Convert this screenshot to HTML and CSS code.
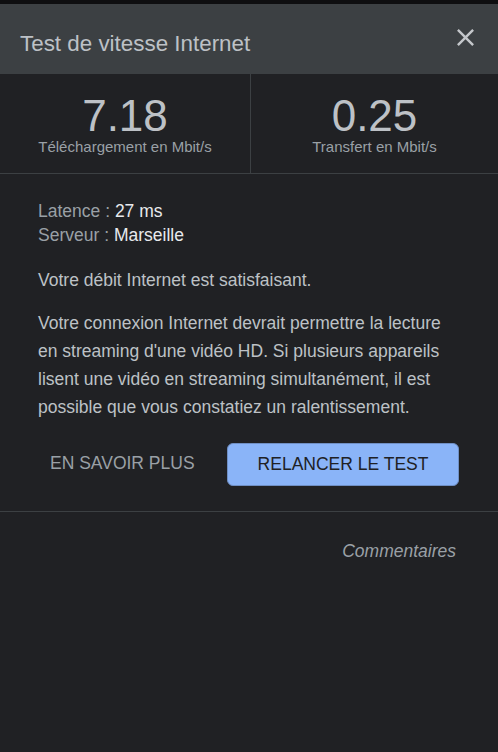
FILE: index.html
```html
<!DOCTYPE html>
<html lang="fr">
<head>
<meta charset="utf-8">
<title>Test de vitesse Internet</title>
<link rel="stylesheet" href="styles.css">
</head>
<body>
<div class="topstrip"></div>
<header class="hdr">
  <h1 class="title">Test de vitesse Internet</h1>
  <button class="close" aria-label="Fermer">
    <svg viewBox="0 0 24 24" width="29" height="29"><path fill="currentColor" d="M19 6.41L17.59 5 12 10.59 6.41 5 5 6.41 10.59 12 5 17.59 6.41 19 12 13.41 17.59 19 19 17.59 13.41 12z"/></svg>
  </button>
</header>
<section class="stats">
  <div class="stat">
    <div class="num">7.18</div>
    <div class="lbl">Téléchargement en Mbit/s</div>
  </div>
  <div class="stat stat-right">
    <div class="num">0.25</div>
    <div class="lbl">Transfert en Mbit/s</div>
  </div>
</section>
<section class="info">
  <div class="meta">
    <div><span class="k">Latence :</span> <span class="v">27 ms</span></div>
    <div><span class="k">Serveur :</span> <span class="v">Marseille</span></div>
  </div>
  <p class="status">Votre débit Internet est satisfaisant.</p>
  <p class="desc">Votre connexion Internet devrait permettre la lecture en streaming d'une vidéo HD. Si plusieurs appareils lisent une vidéo en streaming simultanément, il est possible que vous constatiez un ralentissement.</p>
  <div class="actions">
    <button class="btn-text">EN SAVOIR PLUS</button>
    <button class="btn-primary">RELANCER LE TEST</button>
  </div>
</section>
<footer class="foot">
  <a class="feedback">Commentaires</a>
</footer>
</body>
</html>
```
FILE: styles.css
```css
html, body {
  margin: 0;
  padding: 0;
  background: #202124;
  overflow: hidden;
}
body {
  font-family: "Liberation Sans", Arial, sans-serif;
  color: #bdc1c6;
  width: 498px;
  height: 752px;
}
.topstrip {
  height: 4px;
  background: #0e0e10;
}
.hdr {
  height: 70px;
  background: #3c4043;
  display: flex;
  justify-content: space-between;
  align-items: flex-start;
  padding: 0 18px 0 20px;
  box-sizing: border-box;
}
.title {
  margin: 26px 0 0;
  font-size: 22.4px;
  line-height: 28px;
  font-weight: normal;
  color: #bdc1c6;
}
.close {
  margin-top: 19px;
  padding: 0;
  border: 0;
  background: none;
  color: #c4c7cb;
  width: 29px;
  height: 29px;
  display: block;
}
.close svg { display: block; }
.stats {
  display: grid;
  grid-template-columns: 250px 1fr;
  border-bottom: 1px solid #3c4043;
}
.stat {
  padding: 21px 0 16px;
  text-align: center;
}
.stat-right {
  border-left: 1px solid #3c4043;
}
.num {
  font-size: 44px;
  line-height: 42px;
  color: #bdc1c6;
}
.lbl {
  font-size: 15px;
  line-height: 20px;
  color: #9aa0a6;
}
.info {
  padding: 25px 38px 25px;
  border-bottom: 1px solid #3c4043;
  font-size: 17.5px;
}
.meta {
  line-height: 24px;
}
.k { color: #9aa0a6; }
.v { color: #e8eaed; }
.status {
  margin: 19px 0 0;
  line-height: 28px;
  color: #bdc1c6;
}
.desc {
  margin: 15px 0 0;
  line-height: 28px;
  color: #bdc1c6;
}
.actions {
  margin-top: 22px;
  display: flex;
  align-items: center;
  gap: 20px;
}
.btn-text {
  font-family: inherit;
  font-size: 17.5px;
  background: none;
  border: 0;
  color: #9aa0a6;
  padding: 0 12px;
  height: 40px;
  margin-top: -3px;
}
.btn-primary {
  font-family: inherit;
  font-size: 17.5px;
  height: 43px;
  box-sizing: border-box;
  padding: 0 30px;
  background: #8ab4f8;
  color: #202124;
  border: 1px solid #6f8fc4;
  border-radius: 6px;
}
.foot {
  padding: 27px 42px 0 0;
  text-align: right;
  line-height: 24px;
}
.feedback {
  font-size: 17.5px;
  font-style: italic;
  color: #9aa0a6;
}
```
